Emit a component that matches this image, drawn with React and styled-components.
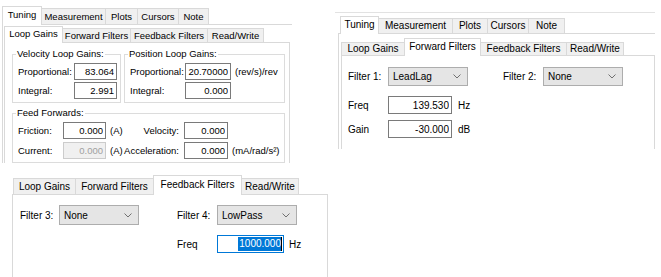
import React from 'react';
import styled, { createGlobalStyle } from 'styled-components';

const Global = createGlobalStyle`
  html, body { margin: 0; padding: 0; background: #ffffff; }
  body { font-family: "Liberation Sans", Arial, sans-serif; }
  *, *::before, *::after { box-sizing: border-box; }
`;

const Canvas = styled.div`
  width: 661px;
  height: 277px;
  overflow: hidden;
  background: #ffffff;
  color: #000000;
  font-family: "Liberation Sans", Arial, sans-serif;
`;

const TopRow = styled.div`
  display: flex;
  align-items: flex-start;
  height: 165px;
`;

const Shot = styled.div`
  flex: none;
  width: ${p => p.$w}px;
  height: ${p => p.$h}px;
  margin: ${p => p.$m};
  padding: ${p => p.$pad};
  font-size: ${p => p.$fs}px;
  overflow: hidden;
  display: flex;
  flex-direction: column;
  border-top: ${p => (p.$frame ? '1px solid #e2e2e2' : 'none')};
`;

const Strip = styled.div`
  flex: none;
  display: flex;
  align-items: flex-end;
  height: ${p => p.$height}px;
  margin-left: ${p => p.$ml || 0}px;
`;

const Tab = styled.div`
  flex: none;
  position: relative;
  z-index: ${p => (p.$sel ? 2 : 1)};
  width: ${p => p.$w}px;
  height: ${p => (p.$sel ? p.$hs : p.$h)}px;
  margin-right: -1px;
  margin-bottom: ${p => (p.$sel ? -1 : 0)}px;
  padding-bottom: ${p => (p.$sel ? 2 : 0)}px;
  background: ${p => (p.$sel ? '#ffffff' : '#f0f0f0')};
  border: 1px solid #d9d9d9;
  border-bottom: none;
  display: flex;
  align-items: center;
  justify-content: center;
  white-space: nowrap;
  line-height: 1;
`;

const Page = styled.div`
  flex: 1;
  min-height: 0;
  align-self: ${p => (p.$w ? 'flex-start' : 'stretch')};
  width: ${p => (p.$w ? `${p.$w}px` : 'auto')};
  margin-left: ${p => p.$ml || 0}px;
  padding: ${p => p.$pad || '0'};
  display: flex;
  flex-direction: column;
  background: #ffffff;
  border-top: 1px solid #d9d9d9;
  border-left: 1px solid #d9d9d9;
  border-right: ${p => (p.$right ? '1px solid #d9d9d9' : 'none')};
`;

const GroupRow = styled.div`
  display: flex;
  gap: 3px;
`;

const Group = styled.fieldset`
  flex: none;
  min-width: 0;
  width: ${p => p.$w}px;
  margin: ${p => p.$mt || 0}px 0 0 0;
  padding: 3px 0 3px 5px;
  border: 1px solid #dcdcdc;
`;

const GroupTitle = styled.legend`
  padding: 0 1px;
  margin-left: -2px;
  line-height: 12px;
  font-size: inherit;
`;

const GainGrid = styled.div`
  display: grid;
  grid-template-columns: ${p => p.$cols};
  grid-auto-rows: 17px;
  row-gap: ${p => p.$gap}px;
  align-items: center;
`;

const Text = styled.span`
  white-space: nowrap;
  text-align: ${p => (p.$right ? 'right' : 'left')};
  padding-right: ${p => p.$pr || 0}px;
  padding-left: ${p => p.$pl || 0}px;
  color: ${p => (p.$dim ? '#000000' : 'inherit')};
`;

const Field = styled.input.attrs({ readOnly: true })`
  display: block;
  width: ${p => (p.$w ? `${p.$w}px` : '100%')};
  height: ${p => p.$h || 17}px;
  margin: 0;
  padding: 0 2px 0 0;
  border: 1px solid ${p => (p.disabled ? '#cccccc' : '#7a7a7a')};
  border-radius: 0;
  background: ${p => (p.disabled ? '#f0f0f0' : '#ffffff')};
  color: ${p => (p.disabled ? '#a0a0a0' : '#000000')};
  -webkit-text-fill-color: ${p => (p.disabled ? '#a0a0a0' : '#000000')};
  opacity: 1;
  font: inherit;
  text-align: right;
  outline: none;
`;

const FocusField = styled.div`
  flex: none;
  width: ${p => p.$w}px;
  height: ${p => p.$h}px;
  border: 1px solid #0078d7;
  background: #ffffff;
  display: flex;
  align-items: center;
  justify-content: flex-end;
  padding-right: 1px;
`;

const Highlight = styled.span`
  background: #0078d7;
  color: #ffffff;
  line-height: 14px;
  padding: 0 0 0 1px;
`;

const Caret = styled.span`
  width: 1px;
  height: 14px;
  background: #000000;
`;

const FormRow = styled.div`
  display: flex;
  align-items: center;
  height: ${p => p.$h}px;
  margin-top: ${p => p.$mt || 0}px;
`;

const Label = styled.span`
  flex: none;
  width: ${p => p.$w}px;
  margin-left: ${p => p.$ml || 0}px;
  white-space: nowrap;
`;

const Unit = styled.span`
  padding-left: ${p => p.$pl}px;
  white-space: nowrap;
`;

const SelectBox = styled.div`
  flex: none;
  width: ${p => p.$w}px;
  height: 100%;
  background: #e5e5e5;
  border: 1px solid #adadad;
  display: flex;
  align-items: center;
  justify-content: space-between;
  padding: 0 6px 0 4px;
`;

function Chevron() {
  return (
    <svg width="8" height="5" viewBox="0 0 8 5" aria-hidden="true">
      <polyline points="0.5,0.5 4,4 7.5,0.5" fill="none" stroke="#707070" strokeWidth="1" />
    </svg>
  );
}

function Select({ w, value }) {
  return (
    <SelectBox $w={w}>
      <span>{value}</span>
      <Chevron />
    </SelectBox>
  );
}

function Tabs({ items, sel, h, hs, height, ml }) {
  return (
    <Strip $height={height} $ml={ml}>
      {items.map(([label, w], i) => (
        <Tab key={label} $w={w} $h={h} $hs={hs} $sel={i === sel}>
          {label}
        </Tab>
      ))}
    </Strip>
  );
}

function PanelA() {
  return (
    <Shot $w={292} $h={163} $m="0" $pad="6px 0 0 2px" $fs={9.5}>
      <Tabs
        height={18}
        h={16}
        hs={19}
        sel={0}
        items={[['Tuning', 40], ['Measurement', 65], ['Plots', 33], ['Cursors', 42], ['Note', 31]]}
      />
      <Page $pad="1px 0 0 1px">
        <Tabs
          height={16}
          h={14}
          hs={17}
          sel={0}
          items={[['Loop Gains', 59], ['Forward Filters', 69], ['Feedback Filters', 78], ['Read/Write', 57]]}
        />
        <Page $w={286} $right $pad="5px 0 0 7px">
          <GroupRow>
            <Group $w={109}>
              <GroupTitle>Velocity Loop Gains:</GroupTitle>
              <GainGrid $cols="56px 43px" $gap={2}>
                <Text>Proportional:</Text>
                <Field defaultValue="83.064" />
                <Text>Integral:</Text>
                <Field defaultValue="2.991" />
              </GainGrid>
            </Group>
            <Group $w={161}>
              <GroupTitle>Position Loop Gains:</GroupTitle>
              <GainGrid $cols="55px 46px auto" $gap={2}>
                <Text>Proportional:</Text>
                <Field defaultValue="20.70000" />
                <Text $pl={4}>(rev/s)/rev</Text>
                <Text>Integral:</Text>
                <Field defaultValue="0.000" />
                <span />
              </GainGrid>
            </Group>
          </GroupRow>
          <Group $w={273} $mt={4}>
            <GroupTitle>Feed Forwards:</GroupTitle>
            <GainGrid $cols="45px 43px 16px 62px 44px auto" $gap={3}>
              <Text>Friction:</Text>
              <Field defaultValue="0.000" />
              <Text $pl={4}>(A)</Text>
              <Text $right $pr={5}>Velocity:</Text>
              <Field defaultValue="0.000" />
              <span />
              <Text>Current:</Text>
              <Field defaultValue="0.000" disabled />
              <Text $pl={4}>(A)</Text>
              <Text $right $pr={5}>Acceleration:</Text>
              <Field defaultValue="0.000" />
              <Text $pl={4}>(mA/rad/s²)</Text>
            </GainGrid>
          </Group>
        </Page>
      </Page>
    </Shot>
  );
}

function PanelB() {
  return (
    <Shot $w={320} $h={137} $m="12px 0 0 43px" $pad="3px 0 0 3px" $fs={10} $frame>
      <Tabs
        height={17}
        h={15}
        hs={18}
        sel={0}
        ml={2}
        items={[['Tuning', 39], ['Measurement', 75], ['Plots', 36], ['Cursors', 42], ['Note', 37]]}
      />
      <Page $pad="4px 0 0 0">
        <Tabs
          height={17}
          h={13}
          hs={18}
          sel={1}
          ml={2}
          items={[['Loop Gains', 64], ['Forward Filters', 77], ['Feedback Filters', 87], ['Read/Write', 58]]}
        />
        <Page $w={314} $ml={2} $right $pad="11px 0 0 6px">
          <FormRow $h={19}>
            <Label $w={40}>Filter 1:</Label>
            <Select w={80} value="LeadLag" />
            <Label $w={40} $ml={35}>Filter 2:</Label>
            <Select w={80} value="None" />
          </FormRow>
          <FormRow $h={18} $mt={10}>
            <Label $w={40}>Freq</Label>
            <Field $w={64} $h={18} defaultValue="139.530" />
            <Unit $pl={6}>Hz</Unit>
          </FormRow>
          <FormRow $h={18} $mt={6}>
            <Label $w={40}>Gain</Label>
            <Field $w={64} $h={18} defaultValue="-30.000" />
            <Unit $pl={6}>dB</Unit>
          </FormRow>
        </Page>
      </Page>
    </Shot>
  );
}

function PanelC() {
  return (
    <Shot $w={322} $h={105} $m="7px 0 0 8px" $pad="3px 0 0 5px" $fs={10}>
      <Tabs
        height={19}
        h={16}
        hs={20}
        sel={2}
        items={[['Loop Gains', 63], ['Forward Filters', 79], ['Feedback Filters', 89], ['Read/Write', 58]]}
      />
      <Page $w={316} $ml={-1} $right $pad="10px 0 0 7px">
        <FormRow $h={20}>
          <Label $w={39}>Filter 3:</Label>
          <Select w={80} value="None" />
          <Label $w={40} $ml={38}>Filter 4:</Label>
          <Select w={80} value="LowPass" />
        </FormRow>
        <FormRow $h={18} $mt={10}>
          <Label $w={40} $ml={157}>Freq</Label>
          <FocusField $w={67} $h={18}>
            <Highlight>1000.000</Highlight>
            <Caret />
          </FocusField>
          <Unit $pl={5}>Hz</Unit>
        </FormRow>
      </Page>
    </Shot>
  );
}

export default function App() {
  return (
    <>
      <Global />
      <Canvas>
        <TopRow>
          <PanelA />
          <PanelB />
        </TopRow>
        <PanelC />
      </Canvas>
    </>
  );
}
